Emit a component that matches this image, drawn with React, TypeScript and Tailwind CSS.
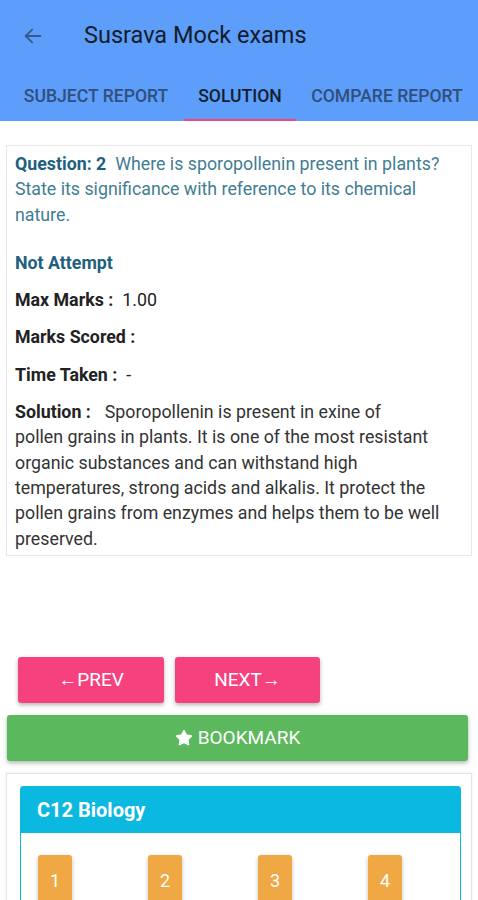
import { Star } from "lucide-react";

const font = { fontFamily: "Roboto, 'Noto Sans', Arial, sans-serif" };

function Header() {
  return (
    <div className="h-[121px] bg-[#5c9ef9]">
      <div className="flex h-[70px] items-center pl-[22px] pt-[1px]">
        <svg
          width="22"
          height="22"
          viewBox="0 0 24 24"
          fill="none"
          stroke="#37598a"
          strokeWidth="2"
          strokeLinecap="round"
          strokeLinejoin="round"
        >
          <path d="M20 12H4" />
          <path d="M11 5l-7 7 7 7" />
        </svg>
        <span className="ml-[40px] text-[23.5px] leading-none text-[#141c2b]">
          Susrava Mock exams
        </span>
      </div>
      <div className="flex h-[51px] text-[17.6px] font-medium leading-none">
        <div className="flex w-[192px] items-center justify-center pt-[3px] text-[#304f7c]">
          SUBJECT REPORT
        </div>
        <div className="-ml-[8px] flex w-[112px] flex-col items-center justify-end">
          <span className="pb-[13px] text-[#141e30]">SOLUTION</span>
          <div className="h-[2px] w-[112px] bg-[#f0457f]" />
        </div>
        <div className="flex flex-1 items-center justify-center pt-[3px] text-[#304f7c]">
          COMPARE REPORT
        </div>
      </div>
    </div>
  );
}

function Row(props: { label: string; value?: string }) {
  return (
    <div className="mt-[12px] text-[#222]">
      <span className="font-bold">{props.label}</span>
      {props.value ? <span className="ml-[9px]">{props.value}</span> : null}
    </div>
  );
}

function QuestionCard() {
  return (
    <div className="mx-[6px] mt-[24px] border border-[#e8e8e8] px-[8px] pb-[4px] pt-[5px] text-[17.8px] leading-[25.3px]">
      <p className="text-[#3f7d92]">
        <b className="text-[#20607e]">Question: 2</b>
        {"\u00a0 "}Where is sporopollenin present in plants? State its
        significance with reference to its chemical nature.
      </p>
      <div className="mt-[23px] font-bold text-[#20607e]">Not Attempt</div>
      <Row label="Max Marks :" value="1.00" />
      <Row label="Marks Scored :" />
      <Row label="Time Taken :" value="-" />
      <div className="mt-[12px] text-[#333]">
        <span className="font-bold text-[#222]">Solution :</span>
        <span className="ml-[14px]">
          Sporopollenin is present in exine of
          <br />
          pollen grains in plants. It is one of the most resistant organic
          substances and can withstand high temperatures, strong acids and
          alkalis. It protect the pollen grains from enzymes and helps them to
          be well preserved.
        </span>
      </div>
    </div>
  );
}

function Nav() {
  return (
    <div className="mt-[101px]">
      <div className="flex gap-[11px] pl-[18px]">
        <button
          type="button"
          className="h-[46px] w-[146px] rounded-[3px] bg-[#f6417f] text-[19px] text-white shadow-[0_2px_4px_rgba(0,0,0,0.3)]"
        >
          ←PREV
        </button>
        <button
          type="button"
          className="h-[46px] w-[145px] rounded-[3px] bg-[#f6417f] text-[19px] text-white shadow-[0_2px_4px_rgba(0,0,0,0.3)]"
        >
          NEXT→
        </button>
      </div>
      <button
        type="button"
        className="ml-[7px] mt-[12px] flex h-[46px] w-[461px] items-center justify-center gap-[5px] rounded-[3px] bg-[#5cb85c] text-[19px] text-white shadow-[0_2px_4px_rgba(0,0,0,0.3)]"
      >
        <Star size={18} fill="white" strokeWidth={1.5} />
        BOOKMARK
      </button>
    </div>
  );
}

function Palette() {
  return (
    <div className="mx-[6px] mt-[12px] h-[200px] border-l border-r border-t border-[#e4e4e4] pl-[13px] pr-[10px] pt-[12px] shadow-[0_0_3px_rgba(0,0,0,0.08)]">
      <div className="h-full rounded-t-[3px] border border-[#0ab8e0]">
        <div className="flex h-[46px] items-center bg-[#0ab8e0] pl-[16px] text-[20px] font-bold text-white">
          C12 Biology
        </div>
        <div className="flex gap-[76px] pl-[17px] pt-[22px]">
          {["1", "2", "3", "4"].map((n) => (
            <div
              key={n}
              className="flex h-[60px] w-[34px] items-start justify-center rounded-[3px] bg-[#efa843] pt-[12px] text-[18px] text-white shadow-[0_2px_4px_rgba(0,0,0,0.25)]"
            >
              {n}
            </div>
          ))}
        </div>
      </div>
    </div>
  );
}

export default function App() {
  return (
    <div style={font} className="h-[900px] w-[478px] overflow-hidden bg-white">
      <Header />
      <QuestionCard />
      <Nav />
      <Palette />
    </div>
  );
}
